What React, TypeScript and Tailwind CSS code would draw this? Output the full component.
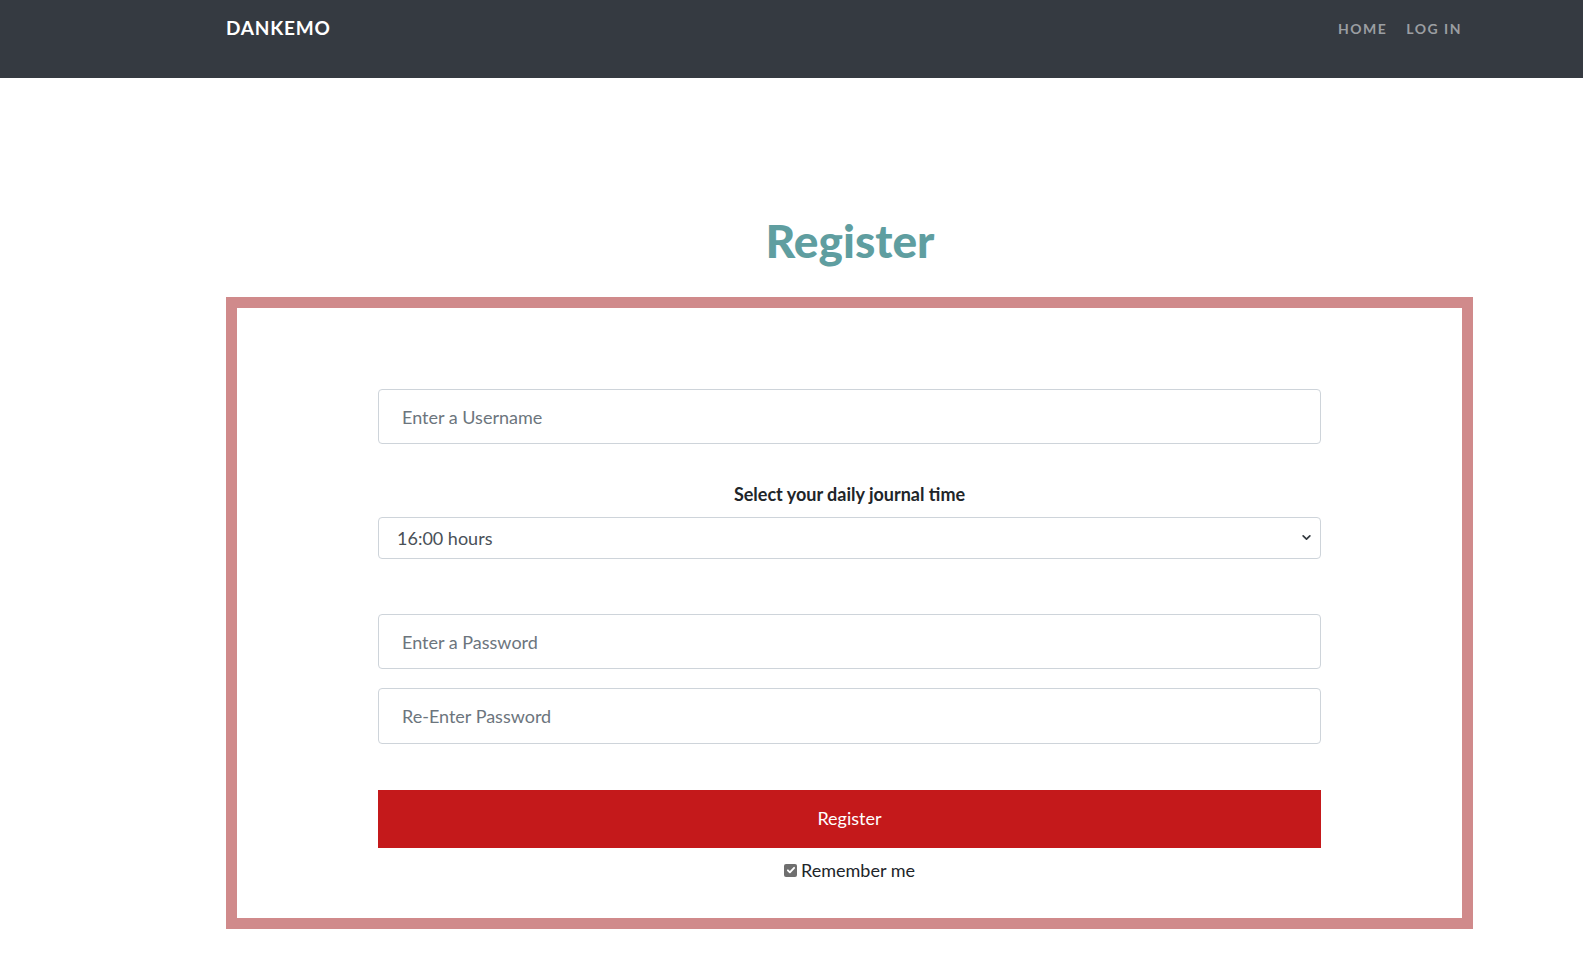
import React from "react";

const navLinks = ["HOME", "LOG IN"];

const hours = ["16:00 hours", "17:00 hours", "18:00 hours", "19:00 hours"];

export default function App() {
  return (
    <div className="min-h-screen bg-white font-['Lato','Open_Sans',sans-serif]">
      {/* top bar */}
      <header className="h-[78px] bg-[#353a41]">
        <div className="ml-[226px] mr-[121px] flex items-start justify-between pt-[15px]">
          <a className="text-[19px] font-bold leading-[26px] tracking-[0.8px] text-white">DANKEMO</a>
          <nav className="flex gap-[19px] pt-[2px]">
            {navLinks.map((l) => (
              <a key={l} className="text-[14px] font-bold leading-[24px] tracking-[1.5px] text-[#9b9ea2]">
                {l}
              </a>
            ))}
          </nav>
        </div>
      </header>

      <h1 className="mt-[135px] ml-[117px] text-center text-[46px] font-black leading-[56px] text-[#5f9ea0]">
        Register
      </h1>

      <form className="mt-[28px] ml-[226px] w-[1247px] border-[11px] border-[#d08a8b] bg-white pt-[81px] pb-[36px]">
        <div className="ml-[141px] flex w-[943px] flex-col">
          <input
            type="text"
            placeholder="Enter a Username"
            className="h-[55px] rounded-[4px] border border-[#ced4da] px-[23px] text-[18px] text-[#495057] outline-none placeholder:text-[#6c757d]"
          />

          <label className="mt-[37px] text-center text-[18px] font-bold leading-[27px] text-[#212529]">
            Select your daily journal time
          </label>
          <div className="relative mt-[9px]">
            <select className="h-[42px] w-full appearance-none rounded-[4px] border border-[#ced4da] bg-white px-[18px] text-[18px] text-[#495057] outline-none">
              {hours.map((h) => (
                <option key={h}>{h}</option>
              ))}
            </select>
            <svg
              className="pointer-events-none absolute right-[9px] top-[16px]"
              width="11"
              height="9"
              viewBox="0 0 16 16"
              fill="none"
              stroke="#343a40"
              strokeWidth="3"
              strokeLinecap="round"
              strokeLinejoin="round"
            >
              <path d="M2 5l6 6 6-6" />
            </svg>
          </div>

          <input
            type="password"
            placeholder="Enter a Password"
            className="mt-[55px] h-[55px] rounded-[4px] border border-[#ced4da] px-[23px] text-[18px] text-[#495057] outline-none placeholder:text-[#6c757d]"
          />
          <input
            type="password"
            placeholder="Re-Enter Password"
            className="mt-[19px] h-[56px] rounded-[4px] border border-[#ced4da] px-[23px] text-[18px] text-[#495057] outline-none placeholder:text-[#6c757d]"
          />

          <button
            type="button"
            className="mt-[46px] h-[58px] bg-[#c4191b] pb-[1px] text-[18px] text-white"
          >
            Register
          </button>

          <label className="mt-[10px] flex items-center justify-center gap-[4px] text-[18px] leading-[24px] text-[#212529]">
            <span className="flex h-[13px] w-[13px] items-center justify-center rounded-[2px] bg-[#6f6f6f]">
              <svg width="10" height="10" viewBox="0 0 16 16" fill="none" stroke="white" strokeWidth="3" strokeLinecap="round" strokeLinejoin="round">
                <path d="M3 8.5l3.2 3.2L13 4.5" />
              </svg>
            </span>
            Remember me
          </label>
        </div>
      </form>
    </div>
  );
}
